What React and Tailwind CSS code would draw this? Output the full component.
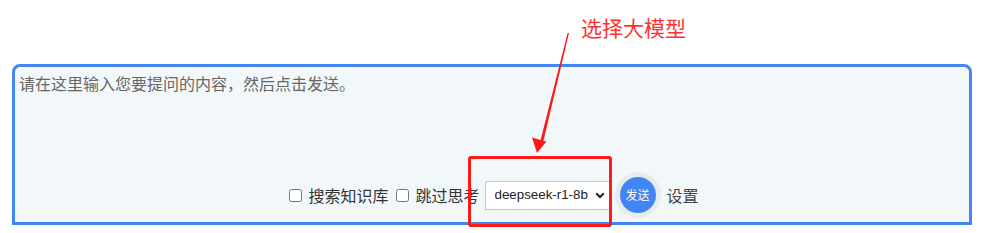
import React from "react";

export default function App() {
  const cjk = { fontFamily: '"Noto Sans CJK SC", "Noto Sans", sans-serif' };
  return (
    <div className="relative w-[984px] h-[233px] bg-white overflow-hidden" style={cjk}>
      <div className="pt-[64px] pl-[12px]">
        <div className="w-[960px] h-[161px] border-[3px] border-[#4285f4] rounded-t-[8px] bg-[#f2f8fa] flex flex-col">
          <textarea
            className="flex-1 w-full resize-none bg-transparent outline-none pt-[4px] px-[4px] text-[16px] leading-[24px] text-[#333] placeholder:text-[#666]"
            style={cjk}
            placeholder="请在这里输入您要提问的内容，然后点击发送。"
          />
          <div className="h-[36px] mb-[9px] pl-[4px] flex items-center justify-center text-[16px] text-[#333] leading-[20px]">
            <input type="checkbox" className="m-0 w-[13px] h-[13px]" />
            <span className="ml-[6px]">搜索知识库</span>
            <input type="checkbox" className="m-0 ml-[8px] w-[13px] h-[13px]" />
            <span className="ml-[6px]">跳过思考</span>
            <div className="relative ml-[5px]">
              <select
                className="appearance-none w-[126px] h-[29px] border border-[#c8c8c8] bg-white pl-[9px] text-[13.33px] text-[#222] outline-none"
                style={{ fontFamily: '"Liberation Sans", Arial, sans-serif' }}
                defaultValue="deepseek-r1-8b"
              >
                <option value="deepseek-r1-8b">deepseek-r1-8b</option>
              </select>
              <svg
                className="absolute right-[6px] top-[11px] pointer-events-none"
                width="10"
                height="7"
                viewBox="0 0 10 7"
              >
                <path d="M1.2 1.3 L5 5 L8.8 1.3" fill="none" stroke="#222" strokeWidth="2" />
              </svg>
            </div>
            <button className="ml-[9px] w-[36px] h-[36px] rounded-full bg-[#4285f4] text-white text-[12px] leading-none shadow-[0_0_0_5px_#e9ecec] flex items-center justify-center">
              发送
            </button>
            <span className="ml-[11px] text-[#444]">设置</span>
          </div>
        </div>
      </div>

      {/* annotation overlay */}
      <div className="absolute left-[468px] top-[156px] w-[144px] h-[71px] border-[3px] border-[#ff1a1a] rounded-[3px]" />
      <svg className="absolute left-0 top-0 pointer-events-none" width="984" height="233">
        <polygon
          points="569,33 567.6,33 540.6,140 532,137.5 537,153 546.5,141.5 543.4,141"
          fill="#ff1a1a"
        />
      </svg>
      <div className="absolute left-[581px] top-[17px] text-[21px] leading-[21px] text-[#ff3030] whitespace-nowrap">
        选择大模型
      </div>
    </div>
  );
}
